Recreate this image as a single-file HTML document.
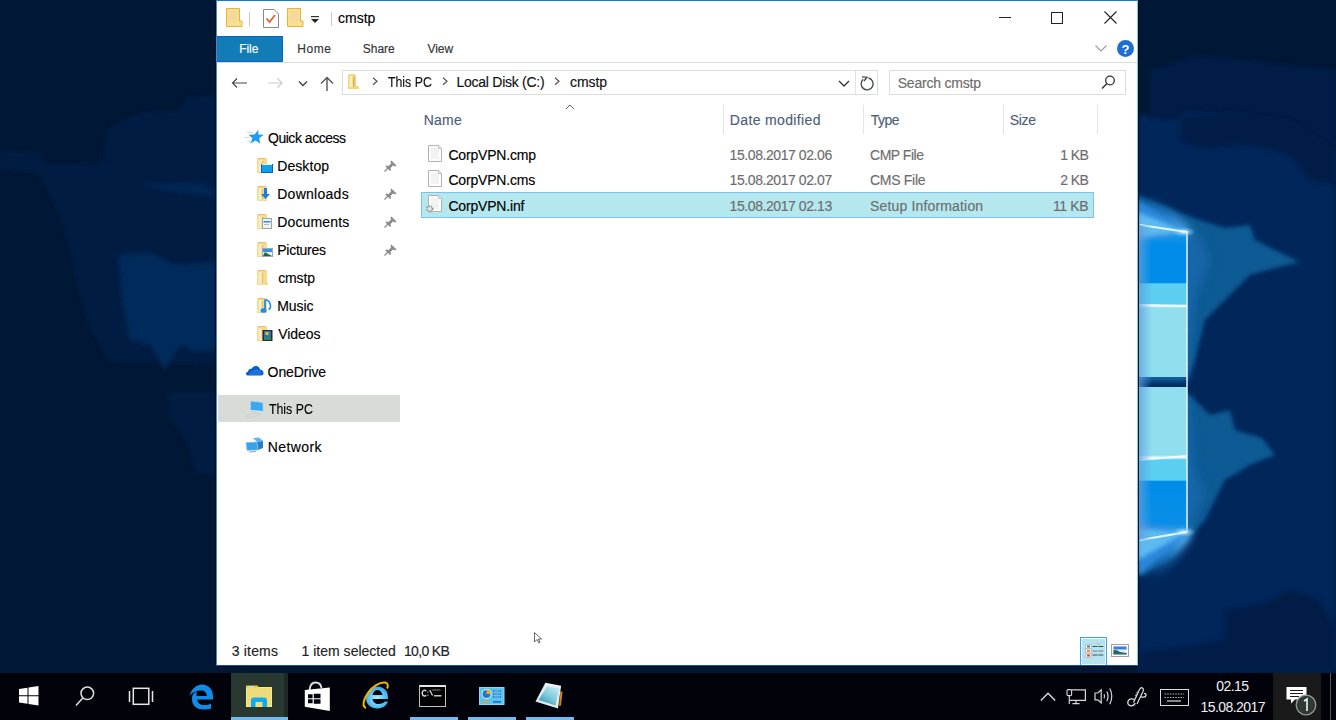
<!DOCTYPE html>
<html><head><meta charset="utf-8">
<style>
*{margin:0;padding:0;box-sizing:border-box}
html,body{width:1336px;height:720px;overflow:hidden}
body{position:relative;background:#001833;font-family:"Liberation Sans",sans-serif;font-size:13px;color:#000}
.a{position:absolute}
.t{position:absolute;line-height:1;white-space:nowrap;-webkit-text-stroke:0.15px currentColor}
svg{position:absolute;overflow:visible}
</style></head><body>

<div class="a" style="left:0;top:0;width:1336px;height:673px;overflow:hidden;background:#001835">
<svg width="1336" height="673" style="left:0;top:0">
<defs>
<filter id="b1" x="-20%" y="-50%" width="140%" height="200%"><feGaussianBlur stdDeviation="0.7"/></filter>
<filter id="b2" x="-20%" y="-20%" width="140%" height="140%"><feGaussianBlur stdDeviation="2"/></filter>
<filter id="b5" x="-20%" y="-20%" width="140%" height="140%"><feGaussianBlur stdDeviation="5"/></filter>
<filter id="b12" x="-20%" y="-20%" width="140%" height="140%"><feGaussianBlur stdDeviation="12"/></filter>
<linearGradient id="pane1" x1="0" y1="222" x2="0" y2="377" gradientUnits="userSpaceOnUse">
<stop offset="0" stop-color="#60c0f8"/><stop offset="0.08" stop-color="#1a98ec"/><stop offset="0.15" stop-color="#008ce8"/><stop offset="0.39" stop-color="#008ce8"/><stop offset="0.40" stop-color="#5acff0"/><stop offset="0.53" stop-color="#5acff0"/><stop offset="0.54" stop-color="#eaf8ff"/><stop offset="0.555" stop-color="#91deee"/><stop offset="1" stop-color="#91deee"/>
</linearGradient>
<linearGradient id="pane2" x1="0" y1="387" x2="0" y2="542" gradientUnits="userSpaceOnUse">
<stop offset="0" stop-color="#91deee"/><stop offset="0.44" stop-color="#91deee"/><stop offset="0.455" stop-color="#eaf8ff"/><stop offset="0.47" stop-color="#5acff0"/><stop offset="0.6" stop-color="#5acff0"/><stop offset="0.61" stop-color="#008ce8"/><stop offset="0.88" stop-color="#0a8ee8"/><stop offset="1" stop-color="#60c0f8"/>
</linearGradient>
<radialGradient id="topglow" cx="1187" cy="232" r="60" gradientUnits="userSpaceOnUse">
<stop offset="0" stop-color="#80d0ff" stop-opacity="0.9"/><stop offset="0.4" stop-color="#2a90e0" stop-opacity="0.6"/><stop offset="1" stop-color="#1a70c0" stop-opacity="0"/>
</radialGradient>
<radialGradient id="botglow" cx="1187" cy="536" r="60" gradientUnits="userSpaceOnUse">
<stop offset="0" stop-color="#80d0ff" stop-opacity="0.9"/><stop offset="0.4" stop-color="#2a90e0" stop-opacity="0.6"/><stop offset="1" stop-color="#1a70c0" stop-opacity="0"/>
</radialGradient>
<linearGradient id="edgeL" x1="0" y1="0" x2="1" y2="0">
<stop offset="0" stop-color="#5aa0e0" stop-opacity="0.8"/><stop offset="1" stop-color="#5aa0e0" stop-opacity="0"/>
</linearGradient>
</defs>
<!-- left lighter region -->
<path d="M0 150 L40 151 L46 164 L104 163 L108 128 L140 112 L180 110 L186 97 L216 95 L216 474 L196 474 L186 440 L170 418 L167 392 L216 392 L216 364 L109 362 L89 328 L77 284 L64 226 L45 185 L38 172 L0 170 Z" fill="#001a42" filter="url(#b2)"/>
<path d="M118 255 L150 252 L175 265 L216 262 L216 350 L195 352 L180 345 L165 370 L150 345 L130 340 L122 300 Z" fill="#00295a" filter="url(#b2)"/>
<path d="M134 184 L200 183 L216 190 L216 197 L180 193 Z" fill="#012552" filter="url(#b2)"/>
<!-- right side -->
<path d="M1138 115 L1176 118 L1185 110 L1240 112 L1290 120 L1336 150 L1336 672 L1138 672 Z" fill="#00285a" filter="url(#b2)"/>
<path d="M1150 70 L1200 55 L1260 62 L1336 70 L1336 150 L1290 120 L1240 112 L1185 110 L1176 118 L1150 118 Z" fill="#001f47" filter="url(#b2)"/>
<path d="M1180 118 L1230 112 L1290 120 L1336 150 L1336 185 L1310 180 L1290 155 L1250 145 L1200 148 L1180 140 Z" fill="#001f47" filter="url(#b2)"/>
<path d="M1138 195 L1185 215 L1225 228 L1250 225 L1255 240 L1275 250 L1300 262 L1275 268 L1250 275 L1225 300 L1205 320 L1195 360 L1187 380 L1138 380 Z" fill="#0f5a94" filter="url(#b2)"/>
<path d="M1138 392 L1190 395 L1210 415 L1230 410 L1235 430 L1262 438 L1275 455 L1250 465 L1225 480 L1205 520 L1175 555 L1145 575 L1138 575 Z" fill="#0f5a94" filter="url(#b2)"/>
<path d="M1138 205 L1170 215 L1200 235 L1210 260 L1195 300 L1187 380 L1138 380 Z" fill="#1466a8" filter="url(#b5)"/>
<path d="M1138 395 L1187 395 L1195 470 L1205 495 L1185 540 L1150 560 L1138 560 Z" fill="#1466a8" filter="url(#b5)"/>
<path d="M1140 652 L1180 648 L1225 640 L1225 610 L1260 605 L1290 590 L1320 600 L1336 630 L1336 673 L1140 673 Z" fill="#001f47" filter="url(#b2)"/>
<!-- logo panes -->
<path d="M1138 195 Q1170 205 1190 232 L1138 240 Z" fill="url(#topglow)" filter="url(#b5)"/>
<path d="M1138 590 Q1175 570 1192 532 L1138 520 Z" fill="url(#botglow)" filter="url(#b5)"/>
<path d="M1138 560 Q1165 550 1187 533 L1138 538 Z" fill="#40a8f0" opacity="0.8" filter="url(#b2)"/>
<polygon points="1138,222 1187,231 1187,377 1138,377" fill="url(#pane1)"/>
<polygon points="1138,387 1187,387 1187,532 1138,542" fill="url(#pane2)"/>
<path d="M1138 305 L1187 306" stroke="#f0faff" stroke-width="2"/>
<path d="M1138 460 L1187 456" stroke="#f0faff" stroke-width="2"/>
<polygon points="1138,200 1190,232 1138,242" fill="#2a86dc" filter="url(#b2)"/>
<polygon points="1138,212 1188,232 1138,238" fill="#5cbaf0" filter="url(#b2)"/>
<line x1="1140" y1="225" x2="1187" y2="232" stroke="#e0f6ff" stroke-width="2.2" filter="url(#b1)"/>
<line x1="1187" y1="231" x2="1187" y2="532" stroke="#e4f4ff" stroke-width="1.5"/>
<polygon points="1138,576 1190,532 1138,522" fill="#2a86dc" filter="url(#b2)"/>
<polygon points="1138,560 1188,532 1138,528" fill="#5cbaf0" filter="url(#b2)"/>
<line x1="1140" y1="540" x2="1187" y2="532" stroke="#e0f6ff" stroke-width="2.2" filter="url(#b1)"/>
<rect x="1138" y="225" width="14" height="315" fill="url(#edgeL)"/>
<radialGradient id="glare" cx="0.5" cy="0.5" r="0.5"><stop offset="0" stop-color="#ffffff" stop-opacity="0.95"/><stop offset="0.4" stop-color="#c8ecff" stop-opacity="0.5"/><stop offset="1" stop-color="#80c8ff" stop-opacity="0"/></radialGradient>
<ellipse cx="1184" cy="232" rx="12" ry="5" fill="url(#glare)"/>
<ellipse cx="1184" cy="532" rx="12" ry="5" fill="url(#glare)"/>
</svg>
</div>
<div class="a" style="left:215px;top:0;width:924px;height:667px;border-left:1px solid #00101c;border-right:1px solid #00101c;border-bottom:1px solid #000a18"></div>
<div class="a" style="left:216px;top:0;width:922px;height:666px;background:#fff;border:1px solid #0a7ee0;border-left-color:#5a80c0;border-right-color:#7cc8ee;border-bottom:1px solid #0a50c0"></div>
<svg width="20" height="20" style="left:226px;top:8px">
<path d="M0.5 0.5 H13.5 V13 H16 V18.5 H0.5 Z" fill="#f8e08e" stroke="#e8b33a" stroke-width="1"/>
<rect x="3" y="3" width="8" height="10" fill="#f2d2a8" opacity="0.6"/>
</svg>
<div class="a" style="left:249px;top:12px;width:1px;height:14px;background:#c8c8c8"></div>
<svg width="18" height="20" style="left:263px;top:9px">
<path d="M0.5 0.5 H11 L15.5 5 V18.5 H0.5 Z" fill="#fdfdfd" stroke="#8a8a8a" stroke-width="1"/>
<path d="M3.5 9.5 L6.5 13 L12 6" fill="none" stroke="#e2643a" stroke-width="1.8"/>
</svg>
<svg width="20" height="20" style="left:287px;top:8px">
<path d="M0.5 0.5 H13.5 V13 H16 V18.5 H0.5 Z" fill="#f8e08e" stroke="#e8b33a" stroke-width="1"/>
<rect x="3" y="3" width="8" height="10" fill="#f2d2a8" opacity="0.6"/>
</svg>
<svg width="10" height="8" style="left:311px;top:16px">
<rect x="0" y="0" width="8" height="1.2" fill="#333"/>
<path d="M0 3 H8 L4 7 Z" fill="#222"/>
</svg>
<div class="a" style="left:331px;top:12px;width:1px;height:14px;background:#c8c8c8"></div>
<div class="t" style="left:338.0px;top:11.15px;font-size:14px;color:#000;letter-spacing:0.0px;word-spacing:0px;transform-origin:0 0;transform:scaleX(1);">cmstp</div>
<div class="a" style="left:999px;top:17px;width:12px;height:1px;background:#222"></div>
<div class="a" style="left:1051px;top:12px;width:12px;height:12px;border:1px solid #222"></div>
<svg width="14" height="14" style="left:1104px;top:11px">
<path d="M0.5 0.5 L12.5 12.5 M12.5 0.5 L0.5 12.5" stroke="#222" stroke-width="1.1"/>
</svg>
<div class="a" style="left:217px;top:36px;width:66px;height:26px;background:#127cb6;border:1px solid #0a62c4;border-left:none"></div>
<div class="t" style="left:239.3px;top:43.24px;font-size:12px;color:#fff;letter-spacing:-0.1px;word-spacing:0px;transform-origin:0 0;transform:scaleX(1);">File</div>
<div class="t" style="left:297.3px;top:43.24px;font-size:12px;color:#333;letter-spacing:0.567px;word-spacing:0px;transform-origin:0 0;transform:scaleX(1);">Home</div>
<div class="t" style="left:362.8px;top:43.24px;font-size:12px;color:#333;letter-spacing:-0.025px;word-spacing:0px;transform-origin:0 0;transform:scaleX(1);">Share</div>
<div class="t" style="left:427.5px;top:43.24px;font-size:12px;color:#333;letter-spacing:-0.067px;word-spacing:0px;transform-origin:0 0;transform:scaleX(1);">View</div>
<div class="a" style="left:217px;top:62px;width:920px;height:1px;background:#dadbdc"></div>
<svg width="14" height="8" style="left:1095px;top:45px">
<path d="M0.5 0.5 L6 6 L11.5 0.5" fill="none" stroke="#9a9a9a" stroke-width="1.1"/>
</svg>
<svg width="18" height="18" style="left:1117px;top:40px">
<circle cx="8.5" cy="8.5" r="8.5" fill="#1f6fd0"/>
<text x="8.5" y="13.5" text-anchor="middle" font-family="Liberation Sans" font-weight="bold" font-size="13" fill="#fff">?</text>
</svg>
<svg width="18" height="12" style="left:231px;top:77px">
<path d="M1.5 6 H16 M6 1.5 L1.5 6 L6 10.5" fill="none" stroke="#4a4a4a" stroke-width="1.2"/>
</svg>
<svg width="18" height="12" style="left:268px;top:77px">
<path d="M0 6 H14 M9.5 1.5 L14 6 L9.5 10.5" fill="none" stroke="#c8cec8" stroke-width="1.2"/>
</svg>
<svg width="12" height="8" style="left:298px;top:80px">
<path d="M1 1.5 L5 5.5 L9 1.5" fill="none" stroke="#444" stroke-width="1.4"/>
</svg>
<svg width="16" height="16" style="left:320px;top:76px">
<path d="M7 15 V1.5 M1 7.5 L7 1.5 L13 7.5" fill="none" stroke="#555" stroke-width="1.4"/>
</svg>
<div class="a" style="left:342px;top:70px;width:536px;height:25px;border:1px solid #d9dfd9"></div>
<div class="a" style="left:855px;top:71px;width:1px;height:23px;background:#dfe4df"></div>
<svg width="14" height="16" style="left:348px;top:74px">
<path d="M0 1 L1 0 H7 L8 1 V12 H11 V15 H0 Z" fill="#f3d77e"/>
<rect x="1.5" y="2" width="3" height="11" fill="#f8ecc0"/>
<rect x="5" y="3" width="1.5" height="10" fill="#e8a850"/>
</svg>
<svg width="8" height="12" style="left:372px;top:77px"><path d="M1 0.8 L5 4.3 L1 7.8" fill="none" stroke="#5a5a5a" stroke-width="1.3"/></svg>
<svg width="8" height="12" style="left:442px;top:77px"><path d="M1 0.8 L5 4.3 L1 7.8" fill="none" stroke="#5a5a5a" stroke-width="1.3"/></svg>
<svg width="8" height="12" style="left:554px;top:77px"><path d="M1 0.8 L5 4.3 L1 7.8" fill="none" stroke="#5a5a5a" stroke-width="1.3"/></svg>
<div class="t" style="left:388.1px;top:75.15px;font-size:14px;color:#111;letter-spacing:0px;word-spacing:0px;transform-origin:0 0;transform:scaleX(0.879);">This PC</div>
<div class="t" style="left:456.6px;top:75.15px;font-size:14px;color:#111;letter-spacing:-0.271px;word-spacing:0px;transform-origin:0 0;transform:scaleX(1);">Local Disk (C:)</div>
<div class="t" style="left:570.0px;top:75.15px;font-size:14px;color:#111;letter-spacing:-0.075px;word-spacing:0px;transform-origin:0 0;transform:scaleX(1);">cmstp</div>
<svg width="14" height="8" style="left:838px;top:80px">
<path d="M1 1 L6 6 L11 1" fill="none" stroke="#333" stroke-width="1.3"/>
</svg>
<svg width="16" height="16" style="left:859px;top:76px">
<path d="M4.2 3.3 A6 6 0 1 0 9.5 2" fill="none" stroke="#444" stroke-width="1.3"/>
<path d="M3 0.8 L8 1.2 L5 5" fill="none" stroke="#444" stroke-width="1.3"/>
</svg>
<div class="a" style="left:889px;top:70px;width:237px;height:25px;border:1px solid #d9dfd9"></div>
<div class="t" style="left:897.7px;top:76.15px;font-size:14px;color:#6d6d6d;letter-spacing:-0.2px;word-spacing:0px;transform-origin:0 0;transform:scaleX(1);">Search cmstp</div>
<svg width="16" height="16" style="left:1101px;top:75px">
<circle cx="9" cy="5.5" r="4.3" fill="none" stroke="#333" stroke-width="1.3"/>
<path d="M6 8.5 L1 13.5" stroke="#333" stroke-width="1.5"/>
</svg>
<div class="a" style="left:218px;top:395px;width:182px;height:27px;background:#d7ddd6"></div>
<svg width="22" height="18" style="left:244px;top:129px">
<path d="M14.5 0.8 L14.3 5.6 L19.8 5.8 L15.2 9.2 L16.3 14.8 L11.6 11.6 L6.2 14.8 L8.4 9.2 L4.5 5.8 L10.5 5.6 Z" fill="#1e9cf0"/>
<path d="M3 3.5 H9 M0.5 8.5 H5.5 M3.5 12.5 H7.5" stroke="#cfd6dc" stroke-width="0.9"/>
</svg>
<div class="t" style="left:268.0px;top:131.15px;font-size:14px;color:#000;letter-spacing:-0.473px;word-spacing:0px;transform-origin:0 0;transform:scaleX(1);">Quick access</div>
<svg width="18" height="18" style="left:257px;top:158px">
<path d="M0 1 L1 0 H9 L10 1 V15 H0 Z" fill="#f3dc8e"/>
<rect x="1.5" y="2" width="3" height="12" fill="#f8ecc4"/>
<rect x="5" y="3" width="1.2" height="10" fill="#eab070" opacity="0.7"/>
<path d="M1 0.5 H8" stroke="#f0b070" stroke-width="1" opacity="0.8"/>
<rect x="4.5" y="6.5" width="11" height="8" fill="#10a0f0" stroke="#0a60c0" stroke-width="1"/><rect x="5" y="6" width="10" height="1" fill="#f0f4f8"/>
</svg>
<div class="t" style="left:277.2px;top:159.15px;font-size:14px;color:#000;letter-spacing:0.083px;word-spacing:0px;transform-origin:0 0;transform:scaleX(1);">Desktop</div>
<svg width="18" height="18" style="left:257px;top:186px">
<path d="M0 1 L1 0 H9 L10 1 V15 H0 Z" fill="#f3dc8e"/>
<rect x="1.5" y="2" width="3" height="12" fill="#f8ecc4"/>
<rect x="5" y="3" width="1.2" height="10" fill="#eab070" opacity="0.7"/>
<path d="M1 0.5 H8" stroke="#f0b070" stroke-width="1" opacity="0.8"/>
<path d="M7 2 H10 V8 H13 L8.5 13 L4 8 H7 Z" fill="#1a80e0"/>
</svg>
<div class="t" style="left:277.2px;top:187.15px;font-size:14px;color:#000;letter-spacing:0.275px;word-spacing:0px;transform-origin:0 0;transform:scaleX(1);">Downloads</div>
<svg width="18" height="18" style="left:257px;top:214px">
<path d="M0 1 L1 0 H9 L10 1 V15 H0 Z" fill="#f3dc8e"/>
<rect x="1.5" y="2" width="3" height="12" fill="#f8ecc4"/>
<rect x="5" y="3" width="1.2" height="10" fill="#eab070" opacity="0.7"/>
<path d="M1 0.5 H8" stroke="#f0b070" stroke-width="1" opacity="0.8"/>
<rect x="5.5" y="4.5" width="9" height="10" fill="#f0f2f4" stroke="#9aa4ac" stroke-width="1"/><rect x="6.5" y="7" width="7" height="1.5" fill="#2a8ee8"/><path d="M7 10.5 H12" stroke="#b0b8c0" stroke-width="1"/>
</svg>
<div class="t" style="left:277.2px;top:215.15px;font-size:14px;color:#000;letter-spacing:0.15px;word-spacing:0px;transform-origin:0 0;transform:scaleX(1);">Documents</div>
<svg width="18" height="18" style="left:257px;top:242px">
<path d="M0 1 L1 0 H9 L10 1 V15 H0 Z" fill="#f3dc8e"/>
<rect x="1.5" y="2" width="3" height="12" fill="#f8ecc4"/>
<rect x="5" y="3" width="1.2" height="10" fill="#eab070" opacity="0.7"/>
<path d="M1 0.5 H8" stroke="#f0b070" stroke-width="1" opacity="0.8"/>
<rect x="5.5" y="6.5" width="10" height="8" fill="#e8eef2" stroke="#a0a8b0" stroke-width="1"/><rect x="6" y="7" width="9" height="3" fill="#3a8ee8"/><path d="M6 14 L8 10 L11 12 L15 14 Z" fill="#1a6a4a"/>
</svg>
<div class="t" style="left:277.2px;top:243.15px;font-size:14px;color:#000;letter-spacing:-0.243px;word-spacing:0px;transform-origin:0 0;transform:scaleX(1);">Pictures</div>
<svg width="18" height="18" style="left:257px;top:270px">
<path d="M0 1 L1 0 H9 L10 1 V15 H0 Z" fill="#f3dc8e"/>
<rect x="1.5" y="2" width="3" height="12" fill="#f8ecc4"/>
<rect x="5" y="3" width="1.2" height="10" fill="#eab070" opacity="0.7"/>
<path d="M1 0.5 H8" stroke="#f0b070" stroke-width="1" opacity="0.8"/>
<path d="M10 13 H11 V15 H10 Z" fill="#f3dc8e"/>
</svg>
<div class="t" style="left:278.2px;top:271.15px;font-size:14px;color:#000;letter-spacing:-0.15px;word-spacing:0px;transform-origin:0 0;transform:scaleX(1);">cmstp</div>
<svg width="18" height="18" style="left:257px;top:298px">
<path d="M0 1 L1 0 H9 L10 1 V15 H0 Z" fill="#f3dc8e"/>
<rect x="1.5" y="2" width="3" height="12" fill="#f8ecc4"/>
<rect x="5" y="3" width="1.2" height="10" fill="#eab070" opacity="0.7"/>
<path d="M1 0.5 H8" stroke="#f0b070" stroke-width="1" opacity="0.8"/>
<path d="M8 1.5 V12" stroke="#1a8ee8" stroke-width="1.8"/><ellipse cx="6.5" cy="12.5" rx="3" ry="2.3" fill="#1a8ee8"/><path d="M8.5 1.5 Q14 3.5 13.5 9 Q13 11 11.5 11.5" fill="none" stroke="#1a8ee8" stroke-width="1.6"/>
</svg>
<div class="t" style="left:277.2px;top:299.15px;font-size:14px;color:#000;letter-spacing:-0.05px;word-spacing:0px;transform-origin:0 0;transform:scaleX(1);">Music</div>
<svg width="18" height="18" style="left:257px;top:326px">
<path d="M0 1 L1 0 H9 L10 1 V15 H0 Z" fill="#f3dc8e"/>
<rect x="1.5" y="2" width="3" height="12" fill="#f8ecc4"/>
<rect x="5" y="3" width="1.2" height="10" fill="#eab070" opacity="0.7"/>
<path d="M1 0.5 H8" stroke="#f0b070" stroke-width="1" opacity="0.8"/>
<rect x="5.5" y="4" width="10" height="11" fill="#2a2a30"/><rect x="7" y="5" width="7" height="9" fill="#2a70c8"/><circle cx="10" cy="7.5" r="1.8" fill="#e8c020"/><path d="M7 10 L10 12.5 L14 9.5 V14 H7 Z" fill="#2a8a5a"/>
</svg>
<div class="t" style="left:278.2px;top:327.15px;font-size:14px;color:#000;letter-spacing:-0.04px;word-spacing:0px;transform-origin:0 0;transform:scaleX(1);">Videos</div>
<svg width="14" height="12" style="left:384px;top:160px">
<path d="M7.5 0.5 L12.5 5.5 L11 6.5 L9 5.5 L6.5 8 L7 10.5 L6 11 L1.5 6.5 L2 5.5 L4.5 6 L7 3.5 L6.5 1.5 Z" fill="#8c8c8c"/>
<path d="M4 8 L0.5 11.5" stroke="#8c8c8c" stroke-width="1.2"/>
</svg>
<svg width="14" height="12" style="left:384px;top:188px">
<path d="M7.5 0.5 L12.5 5.5 L11 6.5 L9 5.5 L6.5 8 L7 10.5 L6 11 L1.5 6.5 L2 5.5 L4.5 6 L7 3.5 L6.5 1.5 Z" fill="#8c8c8c"/>
<path d="M4 8 L0.5 11.5" stroke="#8c8c8c" stroke-width="1.2"/>
</svg>
<svg width="14" height="12" style="left:384px;top:216px">
<path d="M7.5 0.5 L12.5 5.5 L11 6.5 L9 5.5 L6.5 8 L7 10.5 L6 11 L1.5 6.5 L2 5.5 L4.5 6 L7 3.5 L6.5 1.5 Z" fill="#8c8c8c"/>
<path d="M4 8 L0.5 11.5" stroke="#8c8c8c" stroke-width="1.2"/>
</svg>
<svg width="14" height="12" style="left:384px;top:244px">
<path d="M7.5 0.5 L12.5 5.5 L11 6.5 L9 5.5 L6.5 8 L7 10.5 L6 11 L1.5 6.5 L2 5.5 L4.5 6 L7 3.5 L6.5 1.5 Z" fill="#8c8c8c"/>
<path d="M4 8 L0.5 11.5" stroke="#8c8c8c" stroke-width="1.2"/>
</svg>
<svg width="18" height="12" style="left:246px;top:365px">
<path d="M1.5 10.5 Q0 10.5 0 8.8 Q0 7 2 6.8 Q2.5 3.5 5.5 3.8 Q7 0.5 10.5 1 Q13.5 1.5 14 4.5 Q17.5 5 17.5 8 Q17.5 10.5 15 10.5 Z" fill="#0a5cc8"/>
<path d="M3 10 Q2 8 4.5 7.5 Q5 5 8 5.5 Q10 3 12.5 5 Q15.5 5 15.5 8 Q15.5 10 13.5 10 Z" fill="#1a74dc"/>
</svg>
<div class="t" style="left:267.6px;top:365.15px;font-size:14px;color:#000;letter-spacing:-0.086px;word-spacing:0px;transform-origin:0 0;transform:scaleX(1);">OneDrive</div>
<svg width="22" height="20" style="left:244px;top:400px">
<path d="M6.5 1 L19 2.5 L19 12 L6.5 11 Z" fill="#3ea6ea" stroke="#a8d4f0" stroke-width="0.8"/>
<path d="M7 10.5 L18.5 11.5" stroke="#e8eef2" stroke-width="1"/>
<path d="M1 16.5 L10 13 L16.5 14 L7.5 17.5 Z" fill="none" stroke="#c8ccd0" stroke-width="0.8"/>
<path d="M4 15.5 L12 14.5" stroke="#d8dcdf" stroke-width="0.6"/>
</svg>
<div class="t" style="left:269.4px;top:402.35px;font-size:14px;color:#000;letter-spacing:0px;word-spacing:0px;transform-origin:0 0;transform:scaleX(0.879);">This PC</div>
<svg width="22" height="18" style="left:245px;top:437px">
<path d="M8 1 L14 0.5 L18 4 L12 5 Z" fill="#5ab8f0"/>
<path d="M12 5 L18 4 L18 11 L13 13 Z" fill="#2a7ec8"/>
<path d="M1 5.5 L12 5 L13 13 L2 13.5 Z" fill="#3aa2ea" stroke="#8ccaf2" stroke-width="0.6"/>
<path d="M4 15 L11 14.5" stroke="#9aa4ac" stroke-width="1.2"/>
</svg>
<div class="t" style="left:267.8px;top:440.15px;font-size:14px;color:#000;letter-spacing:0.383px;word-spacing:0px;transform-origin:0 0;transform:scaleX(1);">Network</div>
<div class="t" style="left:423.8px;top:113.15px;font-size:14px;color:#4c607a;letter-spacing:0.2px;word-spacing:0px;transform-origin:0 0;transform:scaleX(1);">Name</div>
<svg width="12" height="6" style="left:565px;top:104px"><path d="M1 5 L5 1 L9 5" fill="none" stroke="#666" stroke-width="1"/></svg>
<div class="a" style="left:723px;top:105px;width:1px;height:29px;background:#e5e5e5"></div>
<div class="a" style="left:863px;top:105px;width:1px;height:29px;background:#e5e5e5"></div>
<div class="a" style="left:1003px;top:105px;width:1px;height:29px;background:#e5e5e5"></div>
<div class="a" style="left:1097px;top:105px;width:1px;height:29px;background:#e5e5e5"></div>
<div class="t" style="left:729.8px;top:113.15px;font-size:14px;color:#4c607a;letter-spacing:0.358px;word-spacing:0px;transform-origin:0 0;transform:scaleX(1);">Date modified</div>
<div class="t" style="left:870.7px;top:113.15px;font-size:14px;color:#4c607a;letter-spacing:-0.5px;word-spacing:0px;transform-origin:0 0;transform:scaleX(1);">Type</div>
<div class="t" style="left:1009.7px;top:113.15px;font-size:14px;color:#4c607a;letter-spacing:-0.333px;word-spacing:0px;transform-origin:0 0;transform:scaleX(1);">Size</div>
<div class="a" style="left:421px;top:192px;width:673px;height:26px;background:#b4e7ee;border:1px solid #7dc2ee"></div>
<svg width="18" height="20" style="left:426px;top:145px">
<path d="M2.5 0.5 H12.5 L15.5 3.5 V16.5 H2.5 Z" fill="#fdfdfd" stroke="#b2b2b2" stroke-width="1"/>
<rect x="5" y="3" width="8" height="11" fill="#ececec" opacity="0.7"/>
<path d="M12.5 0.5 V3.5 H15.5" fill="#e8e8e8" stroke="#b8b8b8" stroke-width="0.8"/>

</svg>
<div class="t" style="left:448.4px;top:148.35px;font-size:14px;color:#000;letter-spacing:-0.18px">CorpVPN.cmp</div>
<div class="t" style="left:729.6px;top:148.35px;font-size:14px;color:#6d6d6d;letter-spacing:-0.427px">15.08.2017 02.06</div>
<div class="t" style="left:870.0px;top:148.35px;font-size:14px;color:#6d6d6d;letter-spacing:-0.471px;word-spacing:0px;transform-origin:0 0;transform:scaleX(1);">CMP File</div>
<div class="t" style="left:1060.2px;top:148.35px;font-size:14px;color:#6d6d6d;letter-spacing:-0.567px">1 KB</div>
<svg width="18" height="20" style="left:426px;top:170px">
<path d="M2.5 0.5 H12.5 L15.5 3.5 V16.5 H2.5 Z" fill="#fdfdfd" stroke="#b2b2b2" stroke-width="1"/>
<rect x="5" y="3" width="8" height="11" fill="#ececec" opacity="0.7"/>
<path d="M12.5 0.5 V3.5 H15.5" fill="#e8e8e8" stroke="#b8b8b8" stroke-width="0.8"/>

</svg>
<div class="t" style="left:448.4px;top:173.45px;font-size:14px;color:#000;letter-spacing:-0.18px">CorpVPN.cms</div>
<div class="t" style="left:729.6px;top:173.45px;font-size:14px;color:#6d6d6d;letter-spacing:-0.427px">15.08.2017 02.07</div>
<div class="t" style="left:870.0px;top:173.45px;font-size:14px;color:#6d6d6d;letter-spacing:-0.286px;word-spacing:0px;transform-origin:0 0;transform:scaleX(1);">CMS File</div>
<div class="t" style="left:1060.2px;top:173.45px;font-size:14px;color:#6d6d6d;letter-spacing:-0.567px">2 KB</div>
<svg width="18" height="20" style="left:426px;top:195px">
<path d="M2.5 0.5 H12.5 L15.5 3.5 V16.5 H2.5 Z" fill="#fdfdfd" stroke="#b2b2b2" stroke-width="1"/>
<rect x="5" y="3" width="8" height="11" fill="#ececec" opacity="0.7"/>
<path d="M12.5 0.5 V3.5 H15.5" fill="#e8e8e8" stroke="#b8b8b8" stroke-width="0.8"/>
<circle cx="3.8" cy="13.8" r="2.8" fill="#d8dcdc" stroke="#8c9090" stroke-width="1.6" stroke-dasharray="1.4 0.9"/><circle cx="3.8" cy="13.8" r="1" fill="#f0f0f0"/>
</svg>
<div class="t" style="left:448.4px;top:198.55px;font-size:14px;color:#000;letter-spacing:-0.18px">CorpVPN.inf</div>
<div class="t" style="left:729.6px;top:198.55px;font-size:14px;color:#6d6d6d;letter-spacing:-0.427px">15.08.2017 02.13</div>
<div class="t" style="left:870.0px;top:198.55px;font-size:14px;color:#6d6d6d;letter-spacing:0.163px;word-spacing:0px;transform-origin:0 0;transform:scaleX(1);">Setup Information</div>
<div class="t" style="left:1053.0px;top:198.55px;font-size:14px;color:#6d6d6d;letter-spacing:-0.375px">11 KB</div>
<div class="t" style="left:231.8px;top:643.65px;font-size:14px;color:#222;letter-spacing:0.167px;word-spacing:0px;transform-origin:0 0;transform:scaleX(1);">3 items</div>
<div class="t" style="left:301.5px;top:643.65px;font-size:14px;color:#222;letter-spacing:0.014px;word-spacing:0px;transform-origin:0 0;transform:scaleX(1);">1 item selected</div>
<div class="t" style="left:404.0px;top:643.65px;font-size:14px;color:#222;letter-spacing:-0.667px;word-spacing:0px;transform-origin:0 0;transform:scaleX(1);">10,0 KB</div>
<div class="a" style="left:1080px;top:637px;width:27px;height:28px;background:#b6e4ee;border:1.6px solid #38a2ec;border-bottom:none;box-shadow:inset 0 0 0 1px #f4fafc"></div>
<svg width="24" height="20" style="left:1082px;top:640px">
<rect x="3.5" y="4.5" width="6" height="4" fill="#f4f4f4" stroke="#b8b8b8" stroke-width="0.8"/><rect x="5" y="5.5" width="3" height="2" fill="#3a78c8"/>
<rect x="3.5" y="9" width="6" height="4" fill="#f4f4f4" stroke="#b8b8b8" stroke-width="0.8"/><rect x="5" y="10" width="3" height="2" fill="#c8a040"/>
<rect x="3.5" y="13.5" width="6" height="4" fill="#f4f4f4" stroke="#b8b8b8" stroke-width="0.8"/><rect x="5" y="14.5" width="3" height="2" fill="#d84020"/>
<path d="M10.5 6.5 H21.5 M10.5 15 H21.5" stroke="#4a4a4a" stroke-width="1" stroke-dasharray="5 0.8"/>
<path d="M10.5 11 H21.5" stroke="#7a7a90" stroke-width="1" stroke-dasharray="5 0.8"/>
<path d="M15 3 L17.5 4.5" stroke="#9ab" stroke-width="0.8"/>
</svg>
<div class="a" style="left:1111px;top:644px;width:18px;height:13px;background:#fff;border:1px solid #a0a0a0"></div>
<svg width="16" height="11" style="left:1112px;top:645px">
<rect x="1" y="1" width="14" height="9" fill="#e8f0f8"/>
<rect x="1.5" y="1.5" width="13" height="3" fill="#3a80e0"/>
<path d="M1.5 5 Q5 4.5 8 7 L14.5 8 V9.5 H1.5 Z" fill="#1e6a3a"/>
<path d="M1.5 8.5 H14.5" stroke="#2a60b0" stroke-width="1"/>
</svg>
<svg width="10" height="14" style="left:534px;top:632px">
<path d="M0.5 0.5 V10 L3 7.5 L5 11 L6 10.5 L4.5 7 H7.5 Z" fill="#fff" stroke="#444" stroke-width="0.8"/>
</svg>
<div class="a" style="left:0;top:673px;width:1336px;height:47px;background:#02030a"></div>
<svg width="22" height="22" style="left:19px;top:686px">
<path d="M0 3 L8.5 1.8 V9.3 H0 Z M9.5 1.6 L19.5 0 V9.3 H9.5 Z M0 10.3 H8.5 V17.8 L0 16.6 Z M9.5 10.3 H19.5 V19.5 L9.5 18 Z" fill="#fff"/>
</svg>
<svg width="22" height="22" style="left:75px;top:686px">
<circle cx="12.3" cy="7.3" r="6.3" fill="none" stroke="#ddd" stroke-width="1.5"/>
<path d="M8 11.8 L1 19.5" stroke="#ddd" stroke-width="1.6"/>
</svg>
<svg width="26" height="20" style="left:128px;top:687px">
<rect x="5.3" y="1.3" width="15.5" height="16" fill="none" stroke="#e8e8e8" stroke-width="1.5"/>
<path d="M1.5 4 V15 M24.5 4 V15" stroke="#e8e8e8" stroke-width="1.5"/>
</svg>
<svg width="34" height="34" style="left:184px;top:680px">
<path d="M5.5 15.5 C8 8 13 4.5 18 4.5 C24.5 4.5 29 9.5 29 16 L29 19.5 L23 19.5 L23 16 C22.5 12.5 20.5 10.5 17.5 10.5 C12 10.5 8 12.5 5.5 15.5 Z" fill="#0e8ce8"/>
<path d="M8 19 C8 14.5 10 12.5 13 11.8 C12.5 13 12.5 14.5 12.5 16 L23 16 L23 19.5 L13 19.5 C13.5 23 16.5 25 20 25 C23 25 25.5 24.5 27 23.5 L27 28.5 C25 29.3 22 29.5 19.5 29.5 C12 29.5 8 25 8 19 Z" fill="#0e8ce8"/>
</svg>
<div class="a" style="left:231px;top:673px;width:57px;height:47px;background:#2a3832"></div>
<div class="a" style="left:284px;top:673px;width:4px;height:44px;background:#1f2824"></div>
<div class="a" style="left:231px;top:717px;width:57px;height:3px;background:#76b9ed"></div>
<svg width="40" height="32" style="left:240px;top:680px">
<rect x="6.5" y="7.5" width="25" height="19" fill="#eedc78" stroke="#f2ec88" stroke-width="1"/>
<path d="M6 5.5 H17.5 L19 7.5 H6 Z" fill="#f0c428"/>
<rect x="8" y="6" width="6" height="1.3" fill="#b0e4f8"/>
<path d="M11 27 V20.5 Q11 17.5 14 17.5 H24 Q27 17.5 27 20.5 V27 H22.5 V22 H15.5 V27 Z" fill="#10a8f0"/>
</svg>
<svg width="38" height="36" style="left:298px;top:678px">
<path d="M11.5 12 C12 7 14.5 4.5 17.5 4.5 C20.5 4.5 23 6.5 23.5 10" fill="none" stroke="#e0e0e0" stroke-width="1.8"/>
<path d="M6.8 12 L31.8 9.5 L31.8 33 L6.8 28.8 Z" fill="#fff"/>
<path d="M10 16.3 H14.6 V20.2 H10 Z M15.8 15.8 H22.5 V20.2 H15.8 Z M10 21.3 H14.6 V25.3 H10 Z M15.8 21.3 H22.5 V25.8 H15.8 Z" fill="#02030a"/>
</svg>
<svg width="38" height="36" style="left:356px;top:678px">
<defs><radialGradient id="ieg" cx="0.5" cy="0.55" r="0.6"><stop offset="0" stop-color="#b8eaff"/><stop offset="0.6" stop-color="#5cc4f4"/><stop offset="1" stop-color="#2a9ee8"/></radialGradient></defs>
<path d="M10 20.5 C10 13 15 8.5 21.5 8.5 C28 8.5 32.5 13.5 32 20 L32 21 H16.5 C17 24.5 19.5 26 22.5 26 C25.5 26 27.5 25 29 23.5 H32 C30 28.5 26 30.5 21.5 30.5 C14.5 30.5 10 26 10 20.5 Z M16.5 17 H26.5 C26 14 24 12 21.5 12 C19 12 17 14 16.5 17 Z" fill="url(#ieg)" fill-rule="evenodd"/>
<path d="M10 30 C6 28.5 7 22 12 15 C17 8 24 4 29 4.5 C32 5 32.5 8 31 10.5" fill="none" stroke="#f2b400" stroke-width="2"/>
</svg>
<div class="a" style="left:419px;top:685px;width:27px;height:22px;background:#000;border:1px solid #bcc4bc;border-top:2px solid #e4e8e4"></div>
<svg width="27" height="22" style="left:419px;top:685px">
<path d="M7.2 6 Q5.5 4.8 4.5 5.5 Q3 6.5 3.2 8.5 Q3.5 10.8 5.2 11 Q6.5 11.2 7.2 10.2" fill="none" stroke="#d8d8d8" stroke-width="1.5"/>
<rect x="8.3" y="6.5" width="1.2" height="1.2" fill="#bbb"/><rect x="8.3" y="9.5" width="1.2" height="1.2" fill="#bbb"/>
<path d="M10.8 5 L13.5 10.5" stroke="#d8d8d8" stroke-width="1.3"/>
<path d="M15 10.8 H22.5" stroke="#e8e8e8" stroke-width="1.3"/>
<path d="M13 5 H21.5" stroke="#7a8a80" stroke-width="1"/>
</svg>
<div class="a" style="left:410px;top:717px;width:48px;height:3px;background:#76b9ed"></div>
<svg width="26" height="20" style="left:479px;top:687px">
<rect x="0.5" y="0.5" width="24.5" height="17" fill="#58c4f2" stroke="#8ad6f6" stroke-width="1"/>
<circle cx="7.5" cy="7" r="5" fill="#e8f6fc"/>
<circle cx="7.5" cy="7" r="4" fill="#1a78d0"/>
<path d="M7.5 7 V2.5 A4.5 4.5 0 0 1 12 7 Z" fill="#f0a820"/>
<path d="M14 4 H22 M14 7 H22 M14 10 H22" stroke="#1a70c8" stroke-width="1.3"/>
<path d="M15 4 H21 M15 7 H21 M15 10 H21" stroke="#e8f6fc" stroke-width="0.5"/>
<rect x="3" y="14" width="7" height="1.6" fill="#f0a020"/><rect x="14" y="14" width="8" height="1.6" fill="#1a6ac8"/>
</svg>
<div class="a" style="left:468px;top:717px;width:48px;height:3px;background:#76b9ed"></div>
<svg width="40" height="36" style="left:530px;top:678px">
<defs><linearGradient id="npg" x1="0.8" y1="0" x2="0.1" y2="1"><stop offset="0" stop-color="#b8e8f4"/><stop offset="0.5" stop-color="#80c8d8"/><stop offset="1" stop-color="#2090b8"/></linearGradient></defs>
<path d="M30.5 13 L32.5 14 L31 27.5 L29 28 Z" fill="#d8841c"/>
<path d="M15 5.5 L31 8.5 L28 30.5 L5.5 23.5 Z" fill="#e4ecee"/>
<path d="M17 8.5 L29 10.5 L25.5 27.5 L8.5 22 Z" fill="url(#npg)"/>
<path d="M15 5.5 L31 8.5" stroke="#f4f8f8" stroke-width="1.5"/>
</svg>
<div class="a" style="left:526px;top:717px;width:48px;height:3px;background:#76b9ed"></div>
<svg width="18" height="10" style="left:1040px;top:692px">
<path d="M0.8 8.5 L8 1.2 L15.2 8.5" fill="none" stroke="#ddd" stroke-width="1.4"/>
</svg>
<svg width="30" height="26" style="left:1060px;top:682px">
<path d="M11.5 7.8 H25.4 V18.3 H9.3" fill="none" stroke="#d8d8d8" stroke-width="1.2"/>
<rect x="7" y="7.6" width="4.6" height="6" rx="1.2" fill="#02030a" stroke="#d8d8d8" stroke-width="1.1"/>
<path d="M9.3 13.6 V22" stroke="#d0d0d0" stroke-width="1.2"/>
<path d="M16 18.3 V21.3 M12.5 21.6 H19.6" stroke="#d8d8d8" stroke-width="1.2"/>
</svg>
<svg width="24" height="22" style="left:1092px;top:686px">
<path d="M3 7 H5.8 L9.2 3.8 V16.8 L5.8 13.8 H3 Z" fill="none" stroke="#d8d8d8" stroke-width="1.2"/>
<path d="M12 8.2 Q13.3 10.3 12 12.4 M14.8 5.5 Q17.3 10.3 14.8 15.1 M17.8 2.5 Q21.8 10.3 17.8 18.3" fill="none" stroke="#d8d8d8" stroke-width="1.2"/>
</svg>
<svg width="30" height="30" style="left:1120px;top:680px">
<path d="M13.5 22.5 L19.5 9.5 Q21 7 22.5 8 Q24 9 23 11.5 L17 24" fill="none" stroke="#ddd" stroke-width="1.2"/>
<path d="M16 13.5 L18.5 11 M15 16 L17.5 14" stroke="#ccc" stroke-width="1"/>
<path d="M14.5 19.5 Q9 17.5 7.8 22 Q7.5 25.5 11 25.8 Q14 26 15.2 23" fill="none" stroke="#ddd" stroke-width="1.3"/>
<path d="M21 17 Q25.5 17.8 26 15.5 Q26.3 13.5 24 13.3" fill="none" stroke="#ddd" stroke-width="1.3"/>
</svg>
<div class="a" style="left:1160px;top:689px;width:29px;height:17px;border:1.5px solid #ddd"></div>
<svg width="24" height="12" style="left:1163px;top:692px">
<path d="M1.5 2 H21 M1.5 5.5 H21" stroke="#bbb" stroke-width="1.2" stroke-dasharray="1.5 1.2"/>
<path d="M4 9 H18" stroke="#ddd" stroke-width="1.2"/>
</svg>
<div class="t" style="left:1216.2px;top:678.85px;font-size:14px;color:#f0f0f0;letter-spacing:-0.55px;word-spacing:0px;transform-origin:0 0;transform:scaleX(1);-webkit-text-stroke:0">02.15</div>
<div class="t" style="left:1200.5px;top:700.45px;font-size:14px;color:#f0f0f0;letter-spacing:-0.567px;word-spacing:0px;transform-origin:0 0;transform:scaleX(1);-webkit-text-stroke:0">15.08.2017</div>
<div class="a" style="left:1273px;top:673px;width:48px;height:47px;background:#1a1a1a"></div>
<svg width="24" height="22" style="left:1286px;top:686px">
<path d="M0.5 1 H20.5 V13.5 H9 L5 17.5 V13.5 H0.5 Z" fill="#fff"/>
<path d="M4 4.5 H17 M4 7.5 H17 M4 10.5 H13" stroke="#1c1c1e" stroke-width="1.2"/>
</svg>
<svg width="24" height="24" style="left:1295px;top:694px">
<circle cx="11" cy="11" r="9.8" fill="#2e3b35" stroke="#9a9a9a" stroke-width="1.3"/>
<path d="M9 7 L12 5 V17" fill="none" stroke="#f4f4f4" stroke-width="1.6"/>
</svg>
<div class="a" style="left:1330px;top:673px;width:1px;height:47px;background:#555"></div>
</body></html>
